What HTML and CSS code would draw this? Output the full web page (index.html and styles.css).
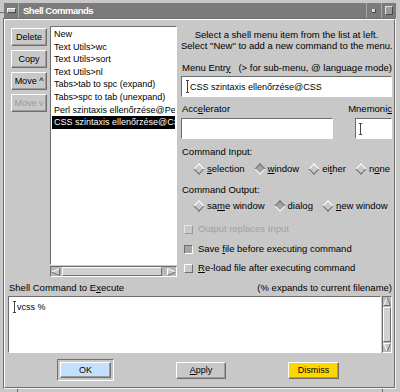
FILE: index.html
```html
<!DOCTYPE html>
<html>
<head>
    <meta charset="UTF-8">
    <meta name="viewport" content="width=device-width, initial-scale=1.0">
    <title>Shell Commands</title>
    <link rel="stylesheet" href="styles.css">
</head>
<body>
    <div class="window">
        <div class="titlebar">
            <div class="tb-menu"><span class="tb-menu-bar"></span></div>
            <div class="tb-title">Shell Commands</div>
            <div class="tb-btn tb-min"><span></span></div>
            <div class="tb-btn tb-max"><span></span></div>
        </div>

        <div class="client">
            <div class="dialog">
                <div class="top">
                    <div class="btn-col">
                        <button class="btn">Delete</button>
                        <button class="btn">Copy</button>
                        <button class="btn">Move ^</button>
                        <button class="btn" disabled>Move v</button>
                    </div>

                    <div class="list-wrap">
                        <ul class="list">
                            <li>New</li>
                            <li>Text Utils&gt;wc</li>
                            <li>Text Utils&gt;sort</li>
                            <li>Text Utils&gt;nl</li>
                            <li>Tabs&gt;tab to spc (expand)</li>
                            <li>Tabs&gt;spc to tab (unexpand)</li>
                            <li>Perl szintaxis ellenőrzése@Perl</li>
                            <li class="sel">CSS szintaxis ellenőrzése@CSS</li>
                        </ul>
                        <div class="hscroll">
                            <svg class="arrow" width="9" height="8" viewBox="0 0 9 8"><path d="M0.5 4L8.5 0.5V7.5Z" fill="#c8c8c8"/><path d="M0.5 4L8.5 0.5" stroke="#fff" fill="none"/><path d="M0.5 4L8.5 7.5V0.5" stroke="#6e6e6e" fill="none"/></svg>
                            <div class="h-trough"><div class="h-slider"></div></div>
                            <svg class="arrow" width="9" height="8" viewBox="0 0 9 8"><path d="M8.5 4L0.5 0.5V7.5Z" fill="#c8c8c8"/><path d="M0.5 7.5V0.5L8.5 4" stroke="#fff" fill="none"/><path d="M0.5 7.5L8.5 4" stroke="#6e6e6e" fill="none"/></svg>
                        </div>
                    </div>

                    <div class="form">
                        <p class="hint">Select a shell menu item from the list at left.<br>Select "New" to add a new command to the menu.</p>

                        <div class="label-row menu-label">
                            <span>Menu Entr<u>y</u></span>
                            <span>(&gt; for sub-menu, @ language mode)</span>
                        </div>
                        <div class="field entry"><svg class="ibeam" width="3" height="13" viewBox="0 0 3 13"><path d="M0 0.5H3M1.5 0.5V12.5M0 12.5H3" stroke="#444" fill="none"/></svg><span>CSS szintaxis ellenőrzése@CSS</span></div>

                        <div class="label-row accel-label">
                            <span>Acc<u>e</u>lerator</span>
                            <span>Mnemoni<u>c</u></span>
                        </div>
                        <div class="field-row">
                            <div class="field accel"></div>
                            <div class="field mnem"><svg class="ibeam" width="3" height="12" viewBox="0 0 3 12"><path d="M0 0.5H3M1.5 0.5V11.5M0 11.5H3" stroke="#444" fill="none"/></svg></div>
                        </div>

                        <div class="group-label in-label">Command Input:</div>
                        <div class="radios in-radios">
                            <span class="radio"><span class="diamond"></span><span><u>s</u>election</span></span>
                            <span class="radio"><span class="diamond on"></span><span><u>w</u>indow</span></span>
                            <span class="radio"><span class="diamond"></span><span>ei<u>t</u>her</span></span>
                            <span class="radio"><span class="diamond"></span><span>n<u>o</u>ne</span></span>
                        </div>

                        <div class="group-label out-label">Command Output:</div>
                        <div class="radios out-radios">
                            <span class="radio"><span class="diamond"></span><span>sa<u>m</u>e window</span></span>
                            <span class="radio"><span class="diamond on"></span><span>dialo<u>g</u></span></span>
                            <span class="radio"><span class="diamond"></span><span><u>n</u>ew window</span></span>
                        </div>

                        <div class="check off check-1"><span class="box"></span><span>Output replaces Input</span></div>
                        <div class="check check-2"><span class="box on"></span><span>Save <u>f</u>ile before executing command</span></div>
                        <div class="check check-3"><span class="box"></span><span><u>R</u>e-load file after executing command</span></div>
                    </div>
                </div>

                <div class="cmd-head">
                    <span>Shell Command to E<u>x</u>ecute</span>
                    <span>(% expands to current filename)</span>
                </div>
                <div class="cmd-box">
                    <div class="cmd-text"><svg class="ibeam" width="3" height="12" viewBox="0 0 3 12"><path d="M0 0.5H3M1.5 0.5V11.5M0 11.5H3" stroke="#444" fill="none"/></svg><span>vcss %</span></div>
                    <div class="vscroll">
                        <svg class="arrow" width="8" height="9" viewBox="0 0 8 9"><path d="M4 0.5L7.5 8.5H0.5Z" fill="#c8c8c8"/><path d="M0.5 8.5L4 0.5" stroke="#fff" fill="none"/><path d="M4 0.5L7.5 8.5H0.5" stroke="#6e6e6e" fill="none"/></svg>
                        <div class="v-slider"></div>
                        <svg class="arrow" width="8" height="9" viewBox="0 0 8 9"><path d="M4 8.5L7.5 0.5H0.5Z" fill="#c8c8c8"/><path d="M4 8.5L0.5 0.5H7.5" stroke="#fff" fill="none"/><path d="M4 8.5L7.5 0.5" stroke="#6e6e6e" fill="none"/></svg>
                    </div>
                </div>

                <div class="actions">
                    <div class="default-ring"><button class="btn ok">OK</button></div>
                    <button class="btn apply"><u>A</u>pply</button>
                    <button class="btn dismiss">Dismiss</button>
                </div>
            </div>
        </div>
    </div>
</body>
</html>
```

FILE: styles.css
```css
:root {
    --bg: #c8c8c8;
    --light: #ffffff;
    --dark: #6e6e6e;
    --title: #7b7b7b;
}

* {
    box-sizing: border-box;
    margin: 0;
    padding: 0;
}

body {
    width: 400px;
    height: 392px;
    overflow: hidden;
    font-family: 'Liberation Sans', Arial, sans-serif;
    font-size: 9.5px;
    color: #000;
    background: var(--bg);
}

/* window manager frame */
.window {
    width: 400px;
    height: 392px;
    padding: 3px 4px 3px 3px;
    display: flex;
    flex-direction: column;
    background:
        linear-gradient(#6e6e6e, #6e6e6e) no-repeat 17px 389px / 1px 3px,
        linear-gradient(#6e6e6e, #6e6e6e) no-repeat 382px 389px / 1px 3px,
        linear-gradient(#6e6e6e, #6e6e6e) no-repeat 0 12px / 4px 1px,
        var(--bg);
}

.titlebar {
    height: 15px;
    margin-left: 1px;
    display: flex;
    background: var(--title);
}

.tb-menu {
    width: 15px;
    display: flex;
    align-items: center;
    justify-content: center;
    border-right: 1px solid #a8a8a8;
}

.tb-menu-bar {
    width: 9px;
    height: 5px;
    background: var(--bg);
    border: 1px solid;
    border-color: var(--light) #4a4a4a #4a4a4a var(--light);
}

.tb-title {
    flex: 1;
    padding-left: 4px;
    color: #fff;
    font-weight: bold;
    font-size: 9.5px;
    letter-spacing: -0.5px;
    line-height: 15px;
}

.tb-btn {
    width: 15px;
    display: flex;
    align-items: center;
    justify-content: center;
    border-left: 1px solid #a8a8a8;
}

.tb-min span {
    width: 4px;
    height: 4px;
    background: #d8d8d8;
    border-right: 1px solid #4a4a4a;
    border-bottom: 1px solid #4a4a4a;
}

.tb-max span {
    width: 8px;
    height: 9px;
    background: #9a9a9a;
    border: 1px solid;
    border-color: #e0e0e0 #4a4a4a #4a4a4a #e0e0e0;
}

.client {
    flex: 1;
    border: 1px solid;
    border-color: var(--dark) #f0f0f0 #f0f0f0 var(--dark);
}

.dialog {
    height: 100%;
    display: flex;
    flex-direction: column;
    border: 1px solid;
    border-color: var(--light) var(--dark) var(--dark) var(--light);
}

/* top part */
.top {
    display: flex;
    padding: 6px 2px 0 6px;
}

.btn-col {
    flex: none;
    width: 36px;
    margin: 2px 3px 0 0;
    display: flex;
    flex-direction: column;
    gap: 4px;
}

.btn {
    height: 18px;
    padding: 0;
    white-space: nowrap;
    font-family: inherit;
    font-size: 9px;
    color: #000;
    background: var(--bg);
    border: 1px solid;
    border-color: var(--light) var(--dark) var(--dark) var(--light);
    box-shadow: inset -1px -1px 0 #9c9c9c;
}

.btn:disabled {
    color: #9a9a9a;
}

.list-wrap {
    flex: none;
    width: 127px;
    margin-right: 4px;
}

.list {
    height: 239px;
    padding: 1px;
    list-style: none;
    font-size: 9px;
    line-height: 12.6px;
    background: #fff;
    border: 1px solid;
    border-color: var(--dark) var(--light) var(--light) var(--dark);
    overflow: hidden;
}

.list li {
    padding-left: 2px;
    white-space: nowrap;
    overflow: hidden;
}

.list .sel {
    background: #000;
    color: #fff;
}

.hscroll {
    height: 11px;
    margin-top: 1px;
    display: flex;
    align-items: center;
    background: #b8b8b8;
    border: 1px solid;
    border-color: var(--dark) var(--light) var(--light) var(--dark);
}

.arrow {
    display: block;
    flex: none;
}

.h-trough {
    flex: 1;
    height: 9px;
    padding: 0 5px 0 2px;
}

.h-slider {
    height: 100%;
    background: #d0d0d0;
    border: 1px solid;
    border-color: var(--light) var(--dark) var(--dark) var(--light);
}

.form {
    flex: 1;
    min-width: 0;
    white-space: nowrap;
}

.hint {
    margin-top: 3px;
    text-align: center;
    line-height: 11px;
}

.label-row {
    display: flex;
    justify-content: space-between;
    line-height: 12px;
    padding-left: 1px;
}

.menu-label {
    margin-top: 11px;
}

.accel-label {
    margin-top: 6px;
}

.field {
    height: 21px;
    background: #fff;
    border: 1px solid;
    border-color: var(--dark) var(--light) var(--light) var(--dark);
    font-size: 9px;
    display: flex;
    align-items: center;
}

.field.entry {
    margin-top: 2px;
    padding-left: 4px;
}

.ibeam {
    display: block;
    flex: none;
    margin-right: 1px;
}

.field-row {
    margin-top: 3px;
    display: flex;
    justify-content: space-between;
}

.field.accel {
    width: 152px;
}

.field.mnem {
    width: 37px;
    padding-left: 3px;
}

.group-label {
    line-height: 12px;
    padding-left: 1px;
}

.in-label {
    margin-top: 7px;
}

.out-label {
    margin-top: 9px;
}

.radios {
    display: flex;
    gap: 9px;
    padding-left: 12px;
    line-height: 12px;
}

.in-radios {
    margin-top: 5px;
}

.out-radios {
    margin-top: 4px;
}

.radio {
    display: flex;
    align-items: center;
}

.diamond {
    width: 8px;
    height: 8px;
    margin: 0 4px 0 2px;
    transform: rotate(45deg);
    background: var(--bg);
    border: 1px solid;
    border-color: var(--light) var(--dark) var(--dark) var(--light);
}

.diamond.on {
    background: #a4a4a4;
    border-color: var(--dark) var(--light) var(--light) var(--dark);
}

.check {
    display: flex;
    align-items: center;
    padding-left: 3px;
    line-height: 12px;
}

.check-1 {
    margin-top: 11px;
}

.check-2 {
    margin-top: 8px;
}

.check-3 {
    margin-top: 7px;
}

.box {
    width: 9px;
    height: 9px;
    margin-right: 5px;
    background: var(--bg);
    border: 1px solid;
    border-color: var(--light) var(--dark) var(--dark) var(--light);
}

.box.on {
    background: #a4a4a4;
    border-color: var(--dark) var(--light) var(--light) var(--dark);
}

.check.off {
    color: #a0a0a0;
}

.check.off .box {
    border-color: #e8e8e8 #9a9a9a #9a9a9a #e8e8e8;
}

/* bottom part */
.cmd-head {
    margin-top: 5px;
    padding: 0 2px 0 4px;
    display: flex;
    justify-content: space-between;
    line-height: 12px;
}

.cmd-box {
    height: 57px;
    margin: 2px 2px 0 3px;
    display: flex;
    gap: 1px;
}

.cmd-text {
    flex: 1;
    padding: 4px 0 0 4px;
    display: flex;
    align-items: flex-start;
    font-size: 9px;
    line-height: 12px;
    background: #fff;
    border: 1px solid;
    border-color: var(--dark) var(--light) var(--light) var(--dark);
}

.vscroll {
    width: 10px;
    display: flex;
    flex-direction: column;
    align-items: center;
    background: #b8b8b8;
    border: 1px solid;
    border-color: var(--dark) var(--light) var(--light) var(--dark);
}

.v-slider {
    flex: 1;
    width: 8px;
    margin: 1px 0;
    background: #d0d0d0;
    border: 1px solid;
    border-color: var(--light) var(--dark) var(--dark) var(--light);
}

.actions {
    height: 22px;
    margin-top: 6px;
    padding-left: 52px;
    display: flex;
    align-items: center;
    gap: 62px;
}

.default-ring {
    width: 57px;
    height: 22px;
    padding: 2px;
    border: 1px solid;
    border-color: var(--dark) var(--light) var(--light) var(--dark);
}

.btn.ok {
    width: 100%;
    height: 100%;
    background: #c4e0ff;
}

.btn.apply {
    width: 50px;
    height: 17px;
}

.btn.dismiss {
    width: 51px;
    height: 17px;
    background: #ffd700;
}
```
